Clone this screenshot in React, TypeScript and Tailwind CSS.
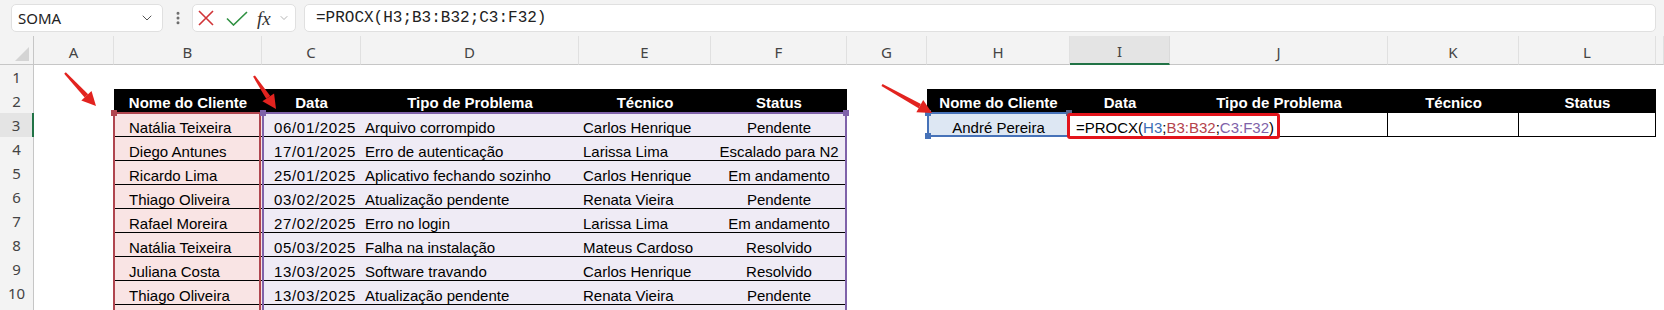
import { ChevronDown, EllipsisVertical } from "lucide-react";

const COL_START = [
  "col-start-1", "col-start-2", "col-start-3", "col-start-4", "col-start-5",
  "col-start-6", "col-start-7", "col-start-8", "col-start-9", "col-start-10",
  "col-start-11", "col-start-12", "col-start-13", "col-start-14",
];
const ROW_START = [
  "row-start-1", "row-start-2", "row-start-3", "row-start-4", "row-start-5",
  "row-start-6", "row-start-7", "row-start-8", "row-start-9", "row-start-10",
  "row-start-11", "row-start-12",
];

const LETTERS = "ABCDEFGHIJKLM".split("");
const HEADERS = ["Nome do Cliente", "Data", "Tipo de Problema", "Técnico", "Status"];

// linhas 3..10 da planilha
const CHAMADOS: string[][] = [
  ["Natália Teixeira", "06/01/2025", "Arquivo corrompido", "Carlos Henrique", "Pendente"],
  ["Diego Antunes", "17/01/2025", "Erro de autenticação", "Larissa Lima", "Escalado para N2"],
  ["Ricardo Lima", "25/01/2025", "Aplicativo fechando sozinho", "Carlos Henrique", "Em andamento"],
  ["Thiago Oliveira", "03/02/2025", "Atualização pendente", "Renata Vieira", "Pendente"],
  ["Rafael Moreira", "27/02/2025", "Erro no login", "Larissa Lima", "Em andamento"],
  ["Natália Teixeira", "05/03/2025", "Falha na instalação", "Mateus Cardoso", "Resolvido"],
  ["Juliana Costa", "13/03/2025", "Software travando", "Carlos Henrique", "Resolvido"],
  ["Thiago Oliveira", "13/03/2025", "Atualização pendente", "Renata Vieira", "Pendente"],
];

const T1_COL = [
  "",
  "bg-[#f9e4e4] pl-[15px]",
  "bg-[#efebf5] justify-end pr-[5px] tracking-[0.7px]",
  "bg-[#efebf5] pl-[4px]",
  "bg-[#efebf5] pl-[4px]",
  "bg-[#efebf5] justify-center",
];

function Formula() {
  return (
    <span>
      =PROCX(<span className="text-[#3b6db5]">H3</span>;
      <span className="text-[#b4434c]">B3:B32</span>;
      <span className="text-[#7f62a9]">C3:F32</span>)
    </span>
  );
}

function SheetCell({ row, col }: { row: number; col: number }) {
  const pos = `${COL_START[col + 1]} ${ROW_START[row]}`;
  const base = "flex items-end whitespace-nowrap text-[15px] leading-[17px] text-black";

  const isHeader = row === 2 && ((col >= 1 && col <= 5) || (col >= 7 && col <= 11));
  if (isHeader) {
    const label = col <= 5 ? HEADERS[col - 1] : HEADERS[col - 7];
    return (
      <div className={`${pos} ${base} justify-center bg-black pb-[2px] font-bold text-white`}>
        {label}
      </div>
    );
  }

  if (row >= 3 && col >= 1 && col <= 5) {
    const data = CHAMADOS[row - 3];
    return (
      <div className={`${pos} ${base} border-b border-black ${T1_COL[col]}`}>
        {data ? data[col - 1] : ""}
      </div>
    );
  }

  if (row === 3 && col === 7) {
    return <div className={`${pos} ${base} justify-center border-b border-black bg-[#dde7f3]`}>André Pereira</div>;
  }
  if (row === 3 && col === 8) {
    return (
      <div className={`${pos} ${base} z-[5] border-b border-black pl-[6px]`}>
        <Formula />
      </div>
    );
  }
  if (row === 3 && col >= 9 && col <= 11) {
    return <div className={`${pos} border-b border-r border-black`} />;
  }

  return <div className={pos} />;
}

function Arrow({ x1, y1, x2, y2 }: { x1: number; y1: number; x2: number; y2: number }) {
  const len = Math.hypot(x2 - x1, y2 - y1);
  const ux = (x2 - x1) / len;
  const uy = (y2 - y1) / len;
  const px = -uy;
  const py = ux;
  const hl = 14;
  const hw = 7;
  const bx = x2 - ux * hl;
  const by = y2 - uy * hl;
  const shaft = [
    [x1 + px * 1.1, y1 + py * 1.1],
    [bx + px * 2.4, by + py * 2.4],
    [bx - px * 2.4, by - py * 2.4],
    [x1 - px * 1.1, y1 - py * 1.1],
  ]
    .map((p) => p.join(","))
    .join(" ");
  const head = [
    [x2, y2],
    [bx + px * hw, by + py * hw],
    [bx - px * hw, by - py * hw],
  ]
    .map((p) => p.join(","))
    .join(" ");
  return (
    <g fill="#e2231f">
      <polygon points={shaft} />
      <polygon points={head} />
    </g>
  );
}

export default function App() {
  const sheetRows = Array.from({ length: 11 }, (_, i) => i + 1);

  return (
    <div className="relative h-[310px] w-[1664px] overflow-hidden bg-white font-['Liberation_Sans',Arial,sans-serif]">
      {/* barra de fórmulas */}
      <div className="flex h-[36px] items-center bg-[#f3f3f3] pl-[11px] pr-[8px]">
        <div className="flex h-[28px] w-[152px] items-center justify-between rounded-[5px] border border-[#e0e0e0] bg-white pl-[6px] pr-[7px]">
          <span className="font-['Noto_Sans',sans-serif] text-[15px] text-[#222]">SOMA</span>
          <ChevronDown size={16} strokeWidth={1.5} className="text-[#555]" />
        </div>
        <div className="flex w-[29px] justify-center">
          <EllipsisVertical size={16} strokeWidth={2.5} className="text-[#6b6b6b]" />
        </div>
        <div className="flex h-[28px] w-[104px] items-center rounded-[5px] border border-[#e0e0e0] bg-white pl-[5px]">
          <svg width="16" height="16" viewBox="0 0 16 16" className="shrink-0">
            <path d="M1 1 L15 15 M15 1 L1 15" stroke="#d13438" strokeWidth="1.6" fill="none" />
          </svg>
          <svg width="22" height="15" viewBox="0 0 22 15" className="ml-[12px] shrink-0">
            <path d="M1 7.5 L7.5 14 L21 1" stroke="#2f9142" strokeWidth="1.6" fill="none" />
          </svg>
          <span className="ml-[9px] font-['Liberation_Serif',serif] text-[19px] italic leading-none text-[#333]">fx</span>
          <ChevronDown size={12} strokeWidth={1.5} className="ml-[7px] text-[#9a9a9a]" />
        </div>
        <div className="ml-[8px] flex h-[28px] flex-1 items-center rounded-[5px] border border-[#e0e0e0] bg-white pl-[11px] font-['Liberation_Mono',monospace] text-[16px] text-[#222]">
          =PROCX(H3;B3:B32;C3:F32)
        </div>
      </div>

      {/* planilha */}
      <div className="grid grid-cols-[34px_80px_148px_99px_218px_132px_136px_80px_143px_100px_218px_131px_137px_1fr] grid-rows-[29px_repeat(11,24px)]">
        <div className="col-start-1 row-start-1 flex items-end justify-end border-b border-r border-[#c6c6c6] bg-[#f3f3f3] pb-[3px] pr-[4px]">
          <svg width="14" height="14" viewBox="0 0 14 14">
            <polygon points="14,0 14,14 0,14" fill="#d4d4d4" />
          </svg>
        </div>

        {LETTERS.map((l, i) => (
          <div
            key={l}
            className={`${COL_START[i + 1]} row-start-1 flex items-center justify-center pt-[4px] font-['Noto_Sans',sans-serif] text-[15px] text-[#444] ${
              l === "I"
                ? "border-b-2 border-r border-b-[#217346] border-r-[#dadada] bg-[#e4e4e4]"
                : "border-b border-r border-b-[#c6c6c6] border-r-[#e0e0e0] bg-[#f3f3f3]"
            }`}
          >
            {l === "M" ? "" : l}
          </div>
        ))}

        {sheetRows.map((r) => (
          <div
            key={`n${r}`}
            className={`col-start-1 ${ROW_START[r]} flex items-center justify-center pt-[1px] font-['Noto_Sans',sans-serif] text-[15px] text-[#444] ${
              r === 3
                ? "border-r-2 border-r-[#217346] bg-[#e4e4e4]"
                : "border-r border-r-[#c6c6c6] bg-[#f3f3f3]"
            }`}
          >
            {r <= 10 ? r : ""}
          </div>
        ))}

        {sheetRows.map((r) =>
          LETTERS.map((_, c) => <SheetCell key={`${r}-${c}`} row={r} col={c} />)
        )}

        {/* destaques das referências da fórmula */}
        <div className="pointer-events-none relative z-10 col-start-3 row-start-4 row-span-9 -mt-px -ml-px mr-px border-2 border-b-0 border-[#b0464f]">
          <span className="absolute -left-[4px] -top-[4px] size-[6px] bg-[#b0464f]" />
        </div>
        <div className="pointer-events-none relative z-10 col-start-4 col-span-4 row-start-4 row-span-9 -mt-px border-2 border-b-0 border-[#7f62a9]">
          <span className="absolute -left-[4px] -top-[4px] size-[6px] bg-[#7f62a9]" />
          <span className="absolute -right-[4px] -top-[4px] size-[6px] bg-[#7f62a9]" />
        </div>
        <div className="pointer-events-none relative z-10 col-start-9 row-start-4 -mt-px border-2 border-[#4672b8]">
          <span className="absolute -left-[4px] -top-[4px] size-[6px] bg-[#4672b8]" />
          <span className="absolute -left-[4px] -bottom-[4px] size-[6px] bg-[#4672b8]" />
          <span className="absolute -right-[4px] -top-[4px] size-[6px] bg-[#5a6790]" />
        </div>
        <div className="pointer-events-none z-20 col-start-10 col-span-2 row-start-4 -ml-[3px] h-[26px] w-[213px] self-start justify-self-start rounded-[3px] border-[3px] border-[#e3141b]" />
      </div>

      {/* setas vermelhas */}
      <svg className="pointer-events-none absolute left-0 top-0 z-30" width="1664" height="310">
        <Arrow x1={65} y1={73} x2={96} y2={106} />
        <Arrow x1={254} y1={76} x2={276} y2={109} />
        <Arrow x1={882} y1={85} x2={932} y2={113} />
      </svg>
    </div>
  );
}
